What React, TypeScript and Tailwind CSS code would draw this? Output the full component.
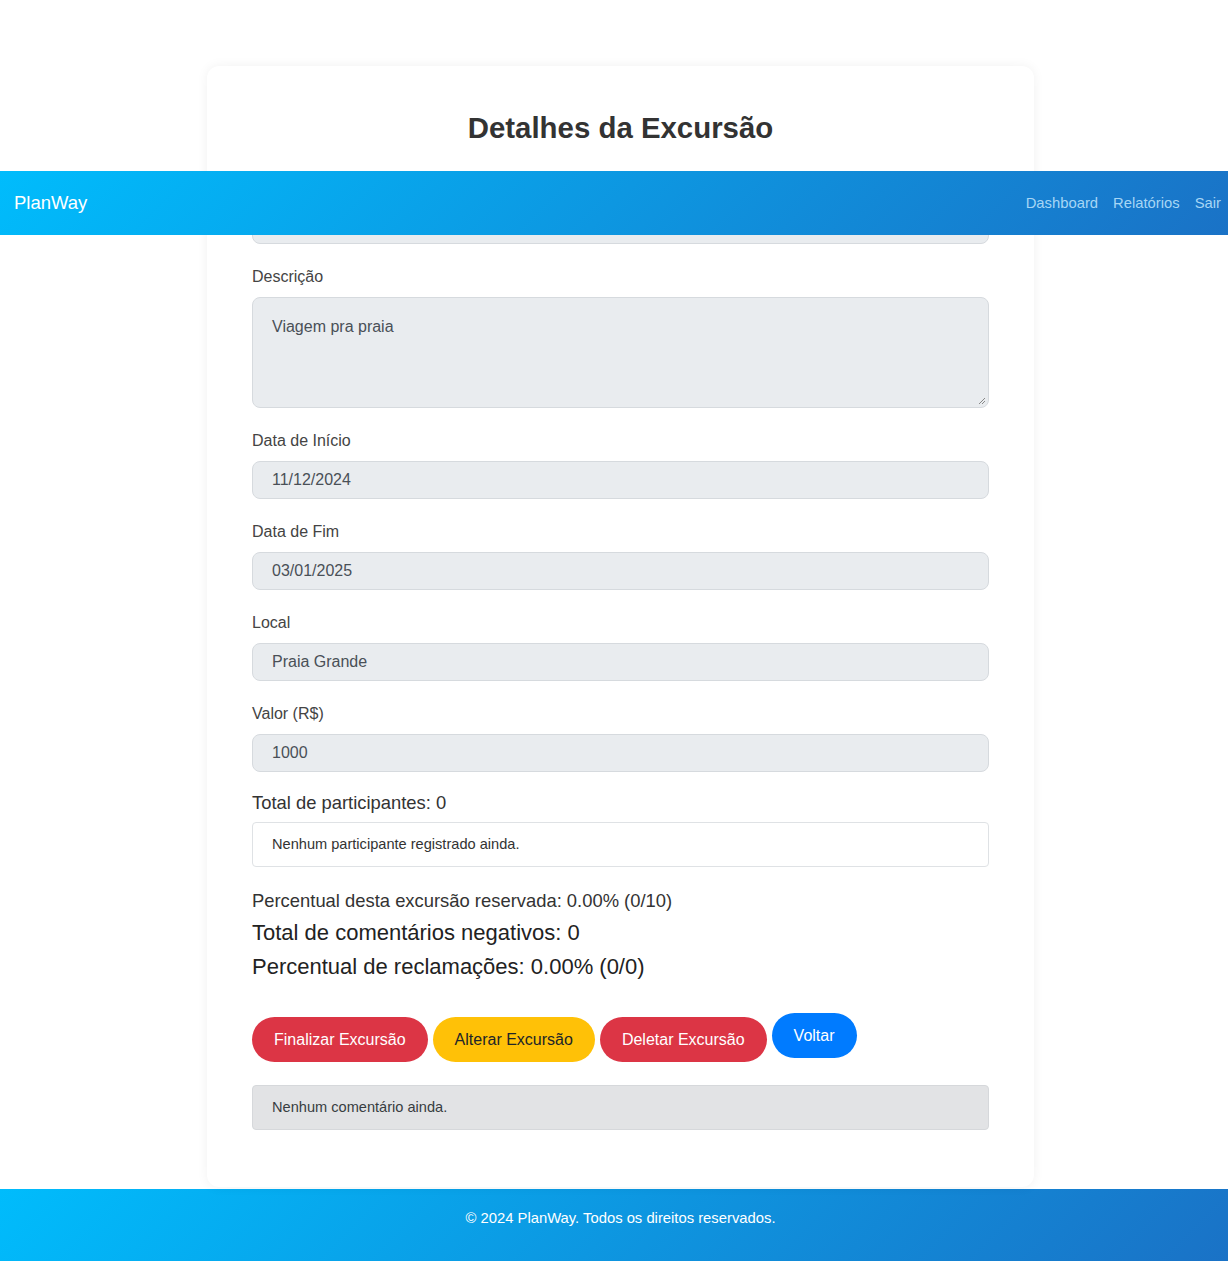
import { type FC } from 'react';

const font = { fontFamily: '"Liberation Sans", Arial, sans-serif' };

interface FieldProps {
  label: string;
  value: string;
  last?: boolean;
}

// Read-only input field, Bootstrap-ish look
const Field: FC<FieldProps> = ({ label, value, last }) => (
  <div className={last ? 'mb-[19px]' : 'mb-[21px]'}>
    <label className="mb-2 block text-[16px] leading-6 text-[#444]">{label}</label>
    <div className="flex h-[38px] items-center rounded-lg border border-[#d6dade] bg-[#e9ecef] px-[19px] text-[16px] text-[#495057]">
      {value}
    </div>
  </div>
);

const Navbar: FC = () => (
  <nav className="absolute left-0 right-0 top-[171px] z-10 flex h-16 items-center justify-between bg-[linear-gradient(135deg,#00bcfc,#1a72c6)] pl-[14px] pr-[7px]">
    <span className="text-[18.5px] text-white">PlanWay</span>
    <div className="flex gap-[15px] text-[14.8px] text-[#a6d6f5]">
      <span>Dashboard</span>
      <span>Relatórios</span>
      <span>Sair</span>
    </div>
  </nav>
);

export default function App() {
  return (
    <div className="relative min-h-[1261px] bg-white" style={font}>
      <Navbar />

      <main className="flex justify-center pl-[13px] pt-[66px]">
        <div className="w-[827px] rounded-xl bg-white px-[45px] pb-[57px] pt-[45px] shadow-[0_0_12px_rgba(0,0,0,0.06)]">
          <h2 className="mb-[29px] text-center text-[29.4px] font-bold leading-[34px] text-[#333]">
            Detalhes da Excursão
          </h2>

          <Field label="Nome da Excursão" value="Praia" />

          <div className="mb-[21px]">
            <label className="mb-2 block text-[16px] leading-6 text-[#444]">Descrição</label>
            <div className="relative h-[111px] rounded-lg border border-[#d6dade] bg-[#e9ecef] px-[19px] pt-[19px] text-[16px] leading-5 text-[#495057]">
              Viagem pra praia
              <svg className="absolute bottom-[2px] right-[2px]" width="8" height="8" viewBox="0 0 8 8">
                <path d="M7 1L1 7M7 4L4 7" stroke="#888" strokeWidth="1" />
              </svg>
            </div>
          </div>

          <Field label="Data de Início" value="11/12/2024" />
          <Field label="Data de Fim" value="03/01/2025" />
          <Field label="Local" value="Praia Grande" />
          <Field label="Valor (R$)" value="1000" last />

          <p className="mb-[7px] text-[18.4px] leading-6 text-[#333]">Total de participantes: 0</p>
          <div className="mb-[22px] flex h-[45px] items-center rounded border border-[#dfe2e5] bg-white px-[19px] text-[14.6px] text-[#333]">
            Nenhum participante registrado ainda.
          </div>

          <p className="text-[18.4px] leading-[24px] text-[#333]">
            Percentual desta excursão reservada: 0.00% (0/10)
          </p>
          <p className="mt-[6px] text-[22px] leading-[28px] text-[#222]">
            Total de comentários negativos: 0
          </p>
          <p className="mt-[6px] text-[22px] leading-[28px] text-[#222]">
            Percentual de reclamações: 0.00% (0/0)
          </p>

          <div className="mt-[32px] flex items-start gap-[5px]">
            <button className="mt-[4px] h-[45px] rounded-full bg-[#dc3545] px-[22px] text-[16px] text-white">
              Finalizar Excursão
            </button>
            <button className="mt-[4px] h-[45px] rounded-full bg-[#ffc107] px-[22px] text-[16px] text-[#212529]">
              Alterar Excursão
            </button>
            <button className="mt-[4px] h-[45px] rounded-full bg-[#dc3545] px-[22px] text-[16px] text-white">
              Deletar Excursão
            </button>
            <button className="h-[45px] rounded-full bg-[#007bff] px-[22px] text-[16px] text-white">
              Voltar
            </button>
          </div>

          <div className="mt-[23px] flex h-[45px] items-center rounded border border-[#d6d8db] bg-[#e2e3e5] px-[19px] text-[14.6px] text-[#383d41]">
            Nenhum comentário ainda.
          </div>
        </div>
      </main>

      <footer className="mt-[2px] h-[72px] bg-[linear-gradient(135deg,#00bcfc,#1a72c6)] pl-[13px] pt-[20px] text-center text-[14.8px] leading-[18px] text-white">
        © 2024 PlanWay. Todos os direitos reservados.
      </footer>
    </div>
  );
}
